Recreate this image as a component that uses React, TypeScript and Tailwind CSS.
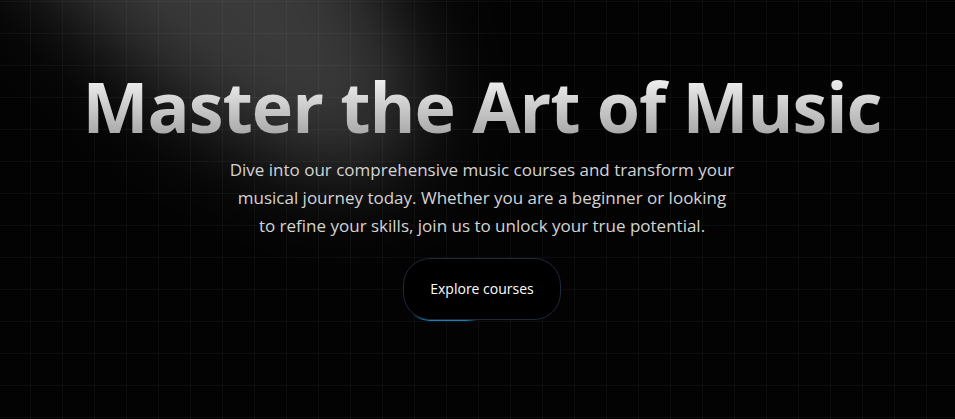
import React from "react";

function Spotlight() {
  return (
    <svg
      aria-hidden
      className="pointer-events-none absolute inset-0 h-full w-full"
      viewBox="0 0 955 419"
      preserveAspectRatio="none"
      fill="none"
    >
      <defs>
        <filter id="spot-blur" x="-50%" y="-50%" width="200%" height="200%">
          <feGaussianBlur stdDeviation="45" />
        </filter>
      </defs>
      <g filter="url(#spot-blur)">
        <ellipse
          cx="150"
          cy="-100"
          rx="360"
          ry="130"
          transform="rotate(46 150 -100)"
          fill="white"
          fillOpacity="0.22"
        />
      </g>
    </svg>
  );
}

function ExploreButton() {
  return (
    <button
      type="button"
      className="relative h-16 w-40 overflow-hidden rounded-[28px] bg-transparent p-[1px]"
    >
      <span
        aria-hidden
        className="absolute left-[2px] top-[30px] h-20 w-20 bg-[radial-gradient(#0ea5e9_40%,transparent_60%)] opacity-80"
      />
      <span className="relative flex h-full w-full items-center justify-center rounded-[27px] border border-[#1e293b] bg-black text-sm text-white antialiased">
        Explore courses
      </span>
    </button>
  );
}

export default function App() {
  return (
    <div className="relative h-[419px] w-full overflow-hidden bg-[#030303] font-['Open_Sans',sans-serif]">
      <div
        aria-hidden
        className="absolute inset-0 bg-[linear-gradient(to_right,rgba(255,255,255,0.035)_1px,transparent_1px),linear-gradient(to_bottom,rgba(255,255,255,0.035)_1px,transparent_1px)] bg-[size:32px_32px] bg-[position:30px_1px]"
      />
      <Spotlight />

      <div className="relative z-10 flex flex-col items-center pl-[9px] pt-[71px] text-center">
        <h1 className="bg-gradient-to-b from-neutral-50 to-neutral-400 bg-clip-text text-[70px] leading-none font-bold tracking-[-1px] text-transparent">
          Master the Art of Music
        </h1>
        <p className="mt-[15px] max-w-lg text-[17px] leading-7 font-normal text-neutral-300">
          Dive into our comprehensive music courses and transform your
          <br />
          musical journey today. Whether you are a beginner or looking
          <br />
          to refine your skills, join us to unlock your true potential.
        </p>
        <div className="mt-[17px]">
          <ExploreButton />
        </div>
      </div>
    </div>
  );
}
